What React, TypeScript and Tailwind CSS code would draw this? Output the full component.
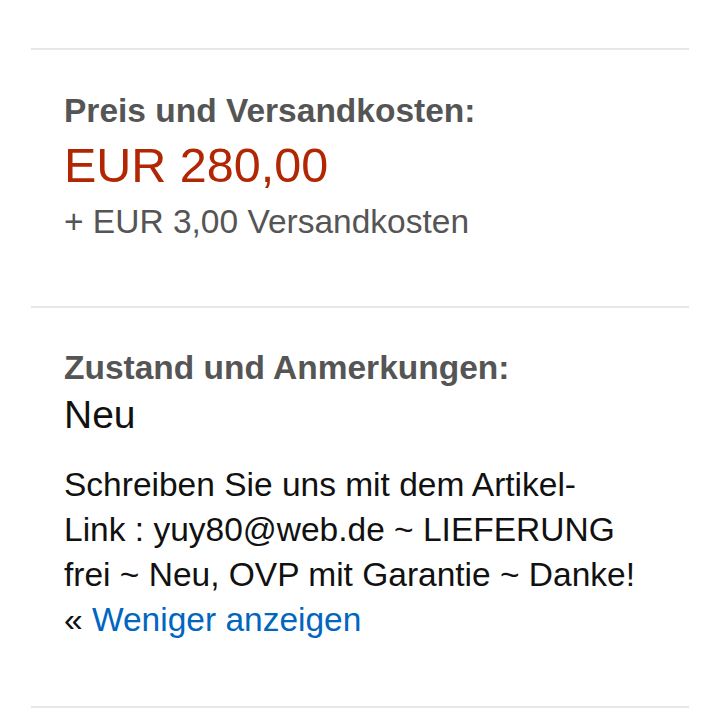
import React from 'react';

const noteLines = [
  'Schreiben Sie uns mit dem Artikel-',
  'Link : yuy80@web.de ~ LIEFERUNG',
  'frei ~ Neu, OVP mit Garantie ~ Danke!',
];

function Divider() {
  return <div className="h-[2px] bg-[#e7e7e7]" />;
}

export default function App() {
  return (
    <div
      className="min-h-[720px] bg-white px-[31px] pt-[48px]"
      style={{ fontFamily: '"Liberation Sans", Arial, sans-serif' }}
    >
      <Divider />

      {/* Price section */}
      <section className="px-[33px] pt-[41px] pb-[64px]">
        <h3 className="text-[33.5px] leading-[40px] font-bold text-[#555555]">
          Preis und Versandkosten:
        </h3>
        <div className="mt-[6px] text-[48.5px] leading-[56px] text-[#b12704]">EUR 280,00</div>
        <div className="mt-[9px] text-[33.5px] leading-[40px] text-[#555555]">
          + EUR 3,00 Versandkosten
        </div>
      </section>

      <Divider />

      {/* Condition section */}
      <section className="px-[33px] pt-[40px] pb-[64px]">
        <h3 className="text-[33.5px] leading-[40px] font-bold text-[#555555]">
          Zustand und Anmerkungen:
        </h3>
        <div className="mt-[5px] text-[39px] leading-[44px] text-[#111111]">Neu</div>
        <p className="mt-[25px] text-[33.5px] leading-[45px] text-[#111111]">
          {noteLines.map((line) => (
            <span key={line} className="block whitespace-nowrap">
              {line}
            </span>
          ))}
          <span className="block whitespace-nowrap">
            « <a className="text-[#0066c0]">Weniger anzeigen</a>
          </span>
        </p>
      </section>

      <Divider />
    </div>
  );
}
